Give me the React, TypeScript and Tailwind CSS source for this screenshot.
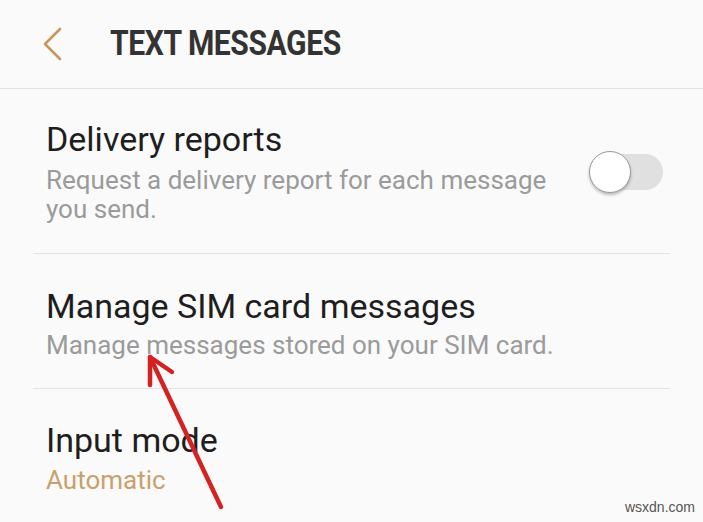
import React from 'react';

const font = { fontFamily: 'Roboto, "Noto Sans", sans-serif' };

function Toggle() {
  return (
    <div className="relative w-[74px] h-[44px] shrink-0">
      <div className="absolute left-[10px] right-0 top-[4px] h-[36px] rounded-full bg-[#e0e0e0]" />
      <div className="absolute left-0 top-[1px] w-[42px] h-[42px] rounded-full bg-white border border-[#9a9a9a] shadow-[0_2px_3px_rgba(0,0,0,0.25)]" />
    </div>
  );
}

function Row({
  title,
  subtitle,
  subClass,
  pad,
  right,
  last,
}: {
  title: string;
  subtitle: React.ReactNode;
  subClass: string;
  pad: string;
  right?: React.ReactNode;
  last?: boolean;
}) {
  return (
    <div className={`mx-[33px] flex items-center pl-[13px] pr-[7px] ${pad} ${last ? '' : 'border-b border-[#e4e4e4]'}`}>
      <div className="flex-1 min-w-0">
        <div className="text-[34px] leading-[40px] text-[#1e1e1e]">{title}</div>
        <div className={`text-[26px] leading-[29px] ${subClass}`}>{subtitle}</div>
      </div>
      {right}
    </div>
  );
}

export default function App() {
  return (
    <main className="relative w-[703px] h-[522px] overflow-hidden bg-[#fafafa]" style={font}>
      <header className="h-[89px] flex items-center border-b border-[#e2e2e2]">
        <svg className="ml-[40px]" width="24" height="36" viewBox="0 0 24 36" fill="none">
          <path d="M20 3 L5 18 L20 33" stroke="#c9955c" strokeWidth="2.6" strokeLinecap="round" strokeLinejoin="round" />
        </svg>
        <h1 className="ml-[46px] text-[35px] font-bold text-[#333333] tracking-[-0.5px] origin-left scale-x-[0.86] whitespace-nowrap">
          TEXT MESSAGES
        </h1>
      </header>

      <Row
        title="Delivery reports"
        subtitle={<>Request a delivery report for each message<br />you send.</>}
        subClass="mt-[7px] text-[#9b9b9b]"
        pad="pt-[30px] pb-[29px]"
        right={<Toggle />}
      />
      <Row
        title="Manage SIM card messages"
        subtitle="Manage messages stored on your SIM card."
        subClass="mt-[5px] text-[#9b9b9b]"
        pad="pt-[32px] pb-[28px]"
      />
      <Row
        title="Input mode"
        subtitle="Automatic"
        subClass="mt-[6px] text-[#c9a06c]"
        pad="pt-[31px] pb-[20px]"
        last
      />

      <svg className="absolute left-0 top-0 pointer-events-none" width="703" height="522" viewBox="0 0 703 522">
        <g stroke="#d42222" strokeWidth="4.5" strokeLinecap="round" strokeLinejoin="round" fill="none">
          <path d="M221 507 L150 357" />
          <path d="M150 385 L150 357 L172 372" />
        </g>
      </svg>

      <div className="absolute right-[8px] bottom-[4px] text-[14px] text-[#555555]" style={{ fontFamily: '"Liberation Sans", sans-serif' }}>
        wsxdn.com
      </div>
    </main>
  );
}
